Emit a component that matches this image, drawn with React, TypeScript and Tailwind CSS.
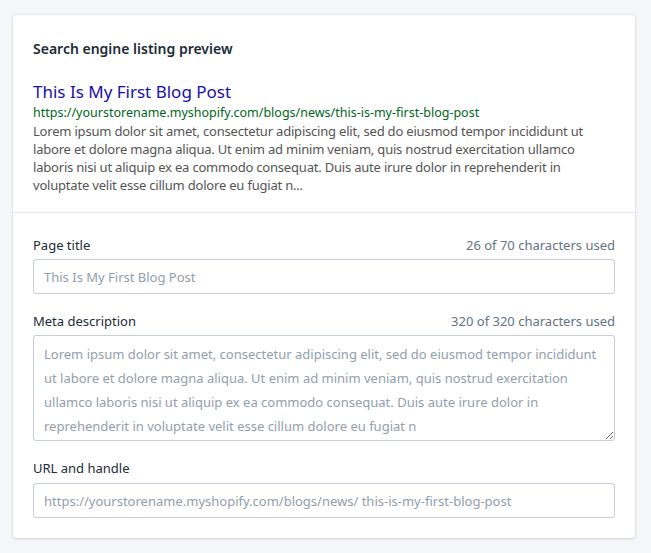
export default function App() {
  const lorem =
    "Lorem ipsum dolor sit amet, consectetur adipiscing elit, sed do eiusmod tempor incididunt ut labore et dolore magna aliqua. Ut enim ad minim veniam, quis nostrud exercitation ullamco laboris nisi ut aliquip ex ea commodo consequat. Duis aute irure dolor in reprehenderit in voluptate velit esse cillum dolore eu fugiat n";
  return (
    <div className="min-h-[553px] bg-[#f4f6f8] pl-[13px] pr-[16px] pt-[15px] pb-[17px] text-[#212b36] [font-family:'Open_Sans',sans-serif]">
      <div className="rounded-[3px] bg-white shadow-[0_0_0_1px_rgba(63,63,68,0.05),0_1px_3px_0_rgba(63,63,68,0.15)]">
        <div className="px-5 pt-[24px] pb-[18px]">
          <h2 className="text-[14px] font-semibold leading-5">Search engine listing preview</h2>
          <div className="mt-[21px] text-[17px] leading-6 text-[#1a0dab]">This Is My First Blog Post</div>
          <div className="text-[12.5px] leading-[18px] text-[#006621]">
            https://yourstorename.myshopify.com/blogs/news/this-is-my-first-blog-post
          </div>
          <p className="text-[13px] leading-[18px] text-[#545454] tracking-[-0.2px]">{lorem}...</p>
        </div>
        <div className="border-t border-[#dfe3e8] px-5 pt-[22px] pb-5 text-[13px]">
          <div className="flex justify-between leading-5">
            <span>Page title</span>
            <span className="text-[#637381]">26 of 70 characters used</span>
          </div>
          <input
            className="mt-[4px] h-[35px] w-full rounded-[3px] border border-[#c4cdd5] px-[10px] text-[13px] text-[#919eab] outline-none"
            defaultValue="This Is My First Blog Post"
          />
          <div className="mt-[17px] flex justify-between leading-5">
            <span>Meta description</span>
            <span className="text-[#637381]">320 of 320 characters used</span>
          </div>
          <textarea
            className="mt-[4px] block h-[106px] w-full resize-y rounded-[3px] border border-[#c4cdd5] px-[10px] pt-[6px] text-[13px] leading-6 text-[#919eab] outline-none"
            defaultValue={lorem}
          />
          <div className="mt-[17px] leading-5">URL and handle</div>
          <input
            className="mt-[5px] h-[35px] w-full rounded-[3px] border border-[#c4cdd5] px-[10px] text-[13px] text-[#919eab] outline-none"
            defaultValue="https://yourstorename.myshopify.com/blogs/news/ this-is-my-first-blog-post"
          />
        </div>
      </div>
    </div>
  );
}
